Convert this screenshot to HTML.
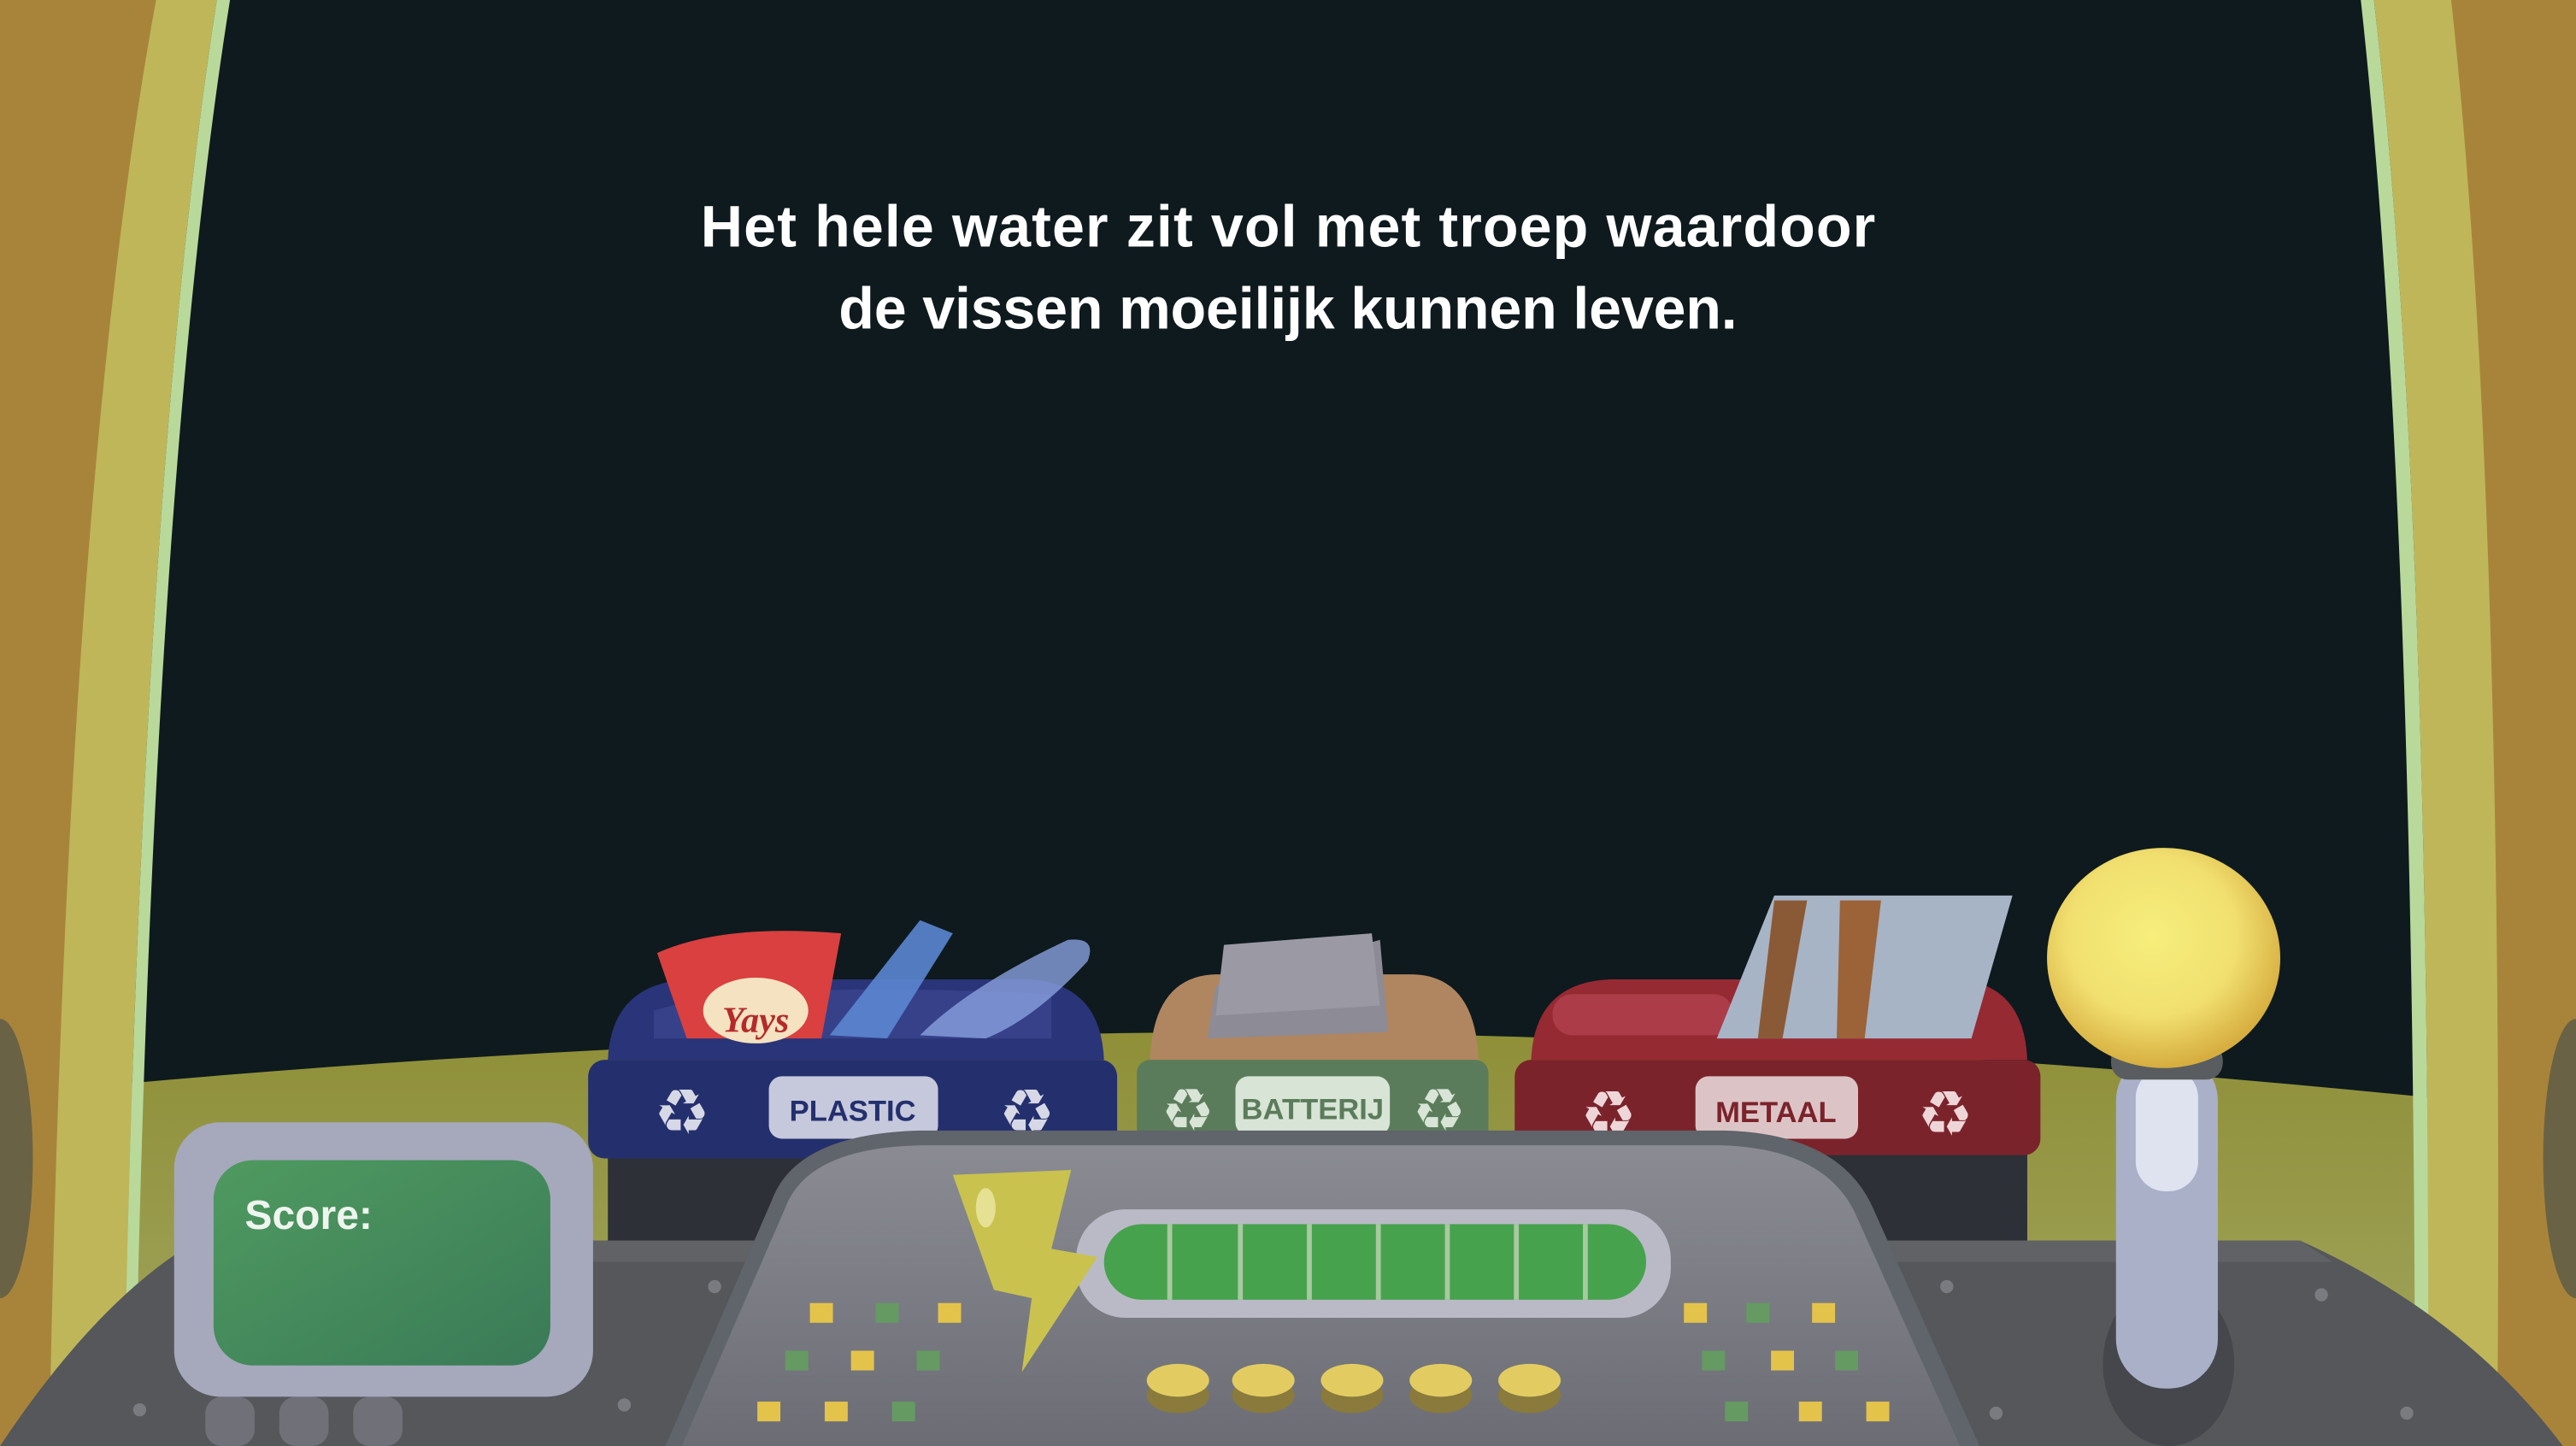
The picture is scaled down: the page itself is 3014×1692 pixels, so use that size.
<!DOCTYPE html>
<html><head><meta charset="utf-8"><style>
html,body{margin:0;padding:0;background:#0e1a1e;overflow:hidden}
svg{display:block}
</style></head><body>
<svg width="3014" height="1692" viewBox="0 0 1568 880" preserveAspectRatio="none" xmlns="http://www.w3.org/2000/svg">
<defs>
<linearGradient id="gnd" x1="0" y1="0" x2="0" y2="1"><stop offset="0" stop-color="#8f8f38"/><stop offset="1" stop-color="#a3a862"/></linearGradient>
<linearGradient id="con" x1="0" y1="0" x2="0" y2="1"><stop offset="0" stop-color="#8a8b93"/><stop offset="1" stop-color="#6c6d74"/></linearGradient>
<radialGradient id="ball" cx="0.45" cy="0.4" r="0.6"><stop offset="0" stop-color="#f6ee7c"/><stop offset="0.6" stop-color="#f1e070"/><stop offset="1" stop-color="#d6ad3f"/></radialGradient>
<linearGradient id="scr" x1="0" y1="0" x2="1" y2="1"><stop offset="0" stop-color="#4f9a60"/><stop offset="1" stop-color="#3a7a57"/></linearGradient>
</defs>
<rect width="1568" height="880" fill="#0e1a1e"/>
<path d="M70 660 Q400 630 760 628 Q1100 630 1480 668 L1480 880 L70 880Z" fill="url(#gnd)"/>
<path d="M0 0 L132 0 Q85 300 75 880 L0 880Z" fill="#bfb65a"/>
<path d="M132 0 L140 0 Q92 300 82 880 L75 880 Q85 300 132 0Z" fill="#b9d99a"/>
<path d="M0 0 L95 0 Q40 300 30 880 L0 880Z" fill="#a8843a"/>
<ellipse cx="0" cy="705" rx="20" ry="85" fill="#6a6245"/>
<path d="M1568 0 L1445 0 Q1480 300 1478 880 L1568 880Z" fill="#bfb65a"/>
<path d="M1445 0 L1437 0 Q1470 300 1470 880 L1478 880 Q1480 300 1445 0Z" fill="#b9d99a"/>
<path d="M1568 0 L1492 0 Q1525 300 1520 880 L1568 880Z" fill="#a8843a"/>
<ellipse cx="1568" cy="705" rx="20" ry="85" fill="#6a6245"/>
<g font-family="Liberation Sans, sans-serif" font-weight="bold" fill="#fff" text-anchor="middle">
<text x="784" y="150" font-size="35.5" textLength="715" lengthAdjust="spacing">Het hele water zit vol met troep waardoor</text>
<text x="784" y="200" font-size="35.5" textLength="547" lengthAdjust="spacing">de vissen moeilijk kunnen leven.</text>
</g>
<rect x="370" y="700" width="302" height="60" fill="#2e3037"/>
<path d="M370 645 Q372 598 420 596 L625 596 Q670 598 672 645Z" fill="#2a3478"/>
<path d="M398 615 Q460 596 640 605 L640 632 L398 632Z" fill="#36418a"/>
<path d="M400 580 Q440 562 512 568 L500 632 L418 632Z" fill="#d9403f"/>
<ellipse cx="460" cy="615" rx="32" ry="20" fill="#f4e2c0"/>
<text x="460" y="628" font-family="Liberation Serif, serif" font-style="italic" font-weight="bold" font-size="22" fill="#b52a2a" text-anchor="middle">Yays</text>
<path d="M505 630 L560 560 L580 568 L540 632Z" fill="#5b86d0" opacity=".9"/>
<path d="M560 630 Q590 600 650 572 Q668 570 662 585 Q630 620 600 632Z" fill="#8aa0dd" opacity=".8"/>
<rect x="358" y="645" width="322" height="60" rx="10" fill="#24306d"/>
<rect x="468" y="655" width="103" height="38" rx="8" fill="#c6c8dc"/>
<text x="519" y="682" font-family="Liberation Sans, sans-serif" font-weight="bold" font-size="18" fill="#24306d" text-anchor="middle">PLASTIC</text>
<g font-family="DejaVu Sans, sans-serif" font-size="38" fill="#d6d8e6" text-anchor="middle"><text x="415" y="690">♻</text><text x="625" y="690">♻</text></g>
<path d="M700 645 Q702 594 740 593 L860 593 Q898 594 900 645Z" fill="#b08660"/>
<path d="M740 600 L840 572 L845 628 L735 632Z" fill="#8c8b96"/>
<path d="M745 575 L835 568 L840 612 L740 618Z" fill="#9b9aa4"/>
<rect x="692" y="645" width="214" height="50" rx="8" fill="#5b7c5a"/>
<rect x="752" y="655" width="94" height="36" rx="8" fill="#d7e4d6"/>
<text x="799" y="681" font-family="Liberation Sans, sans-serif" font-weight="bold" font-size="18" fill="#5b7c5a" text-anchor="middle">BATTERIJ</text>
<g font-family="DejaVu Sans, sans-serif" font-size="36" fill="#d7e4d6" text-anchor="middle"><text x="723" y="688">♻</text><text x="876" y="688">♻</text></g>
<rect x="932" y="700" width="302" height="60" fill="#2e3037"/>
<path d="M932 645 Q934 598 980 596 L1190 596 Q1232 598 1234 645Z" fill="#962a33"/>
<rect x="945" y="605" width="110" height="25" rx="12" fill="#ac3c48"/>
<path d="M1045 632 L1080 545 L1225 545 L1200 632Z" fill="#a7b4c6"/>
<path d="M1080 548 L1100 548 L1085 632 L1070 632Z" fill="#8a5a36"/>
<path d="M1120 548 L1145 548 L1135 632 L1118 632Z" fill="#9c6238"/>
<rect x="922" y="645" width="320" height="58" rx="10" fill="#7b232b"/>
<rect x="1032" y="655" width="99" height="38" rx="8" fill="#dcc4c6"/>
<text x="1081" y="683" font-family="Liberation Sans, sans-serif" font-weight="bold" font-size="18" fill="#7b232b" text-anchor="middle">METAAL</text>
<g font-family="DejaVu Sans, sans-serif" font-size="38" fill="#eed6d8" text-anchor="middle"><text x="979" y="691">♻</text><text x="1184" y="691">♻</text></g>
<path d="M0 880 Q60 790 120 755 L1400 755 Q1500 800 1560 880Z" fill="#55575a"/>
<path d="M120 755 L1400 755 L1420 768 L110 768Z" fill="#606266"/>
<g fill="#7a7b80"><circle cx="435" cy="783" r="4"/><circle cx="380" cy="855" r="4"/><circle cx="85" cy="858" r="4"/><circle cx="1185" cy="783" r="4"/><circle cx="1413" cy="788" r="4"/><circle cx="1215" cy="860" r="4"/><circle cx="1465" cy="860" r="4"/></g>
<g fill="#707178"><rect x="125" y="850" width="30" height="30" rx="10"/><rect x="170" y="850" width="30" height="30" rx="10"/><rect x="215" y="850" width="30" height="30" rx="10"/></g>
<path d="M405 880 L470 730 Q485 690 560 688 L1050 688 Q1120 690 1140 735 L1205 880Z" fill="#60646b"/>
<path d="M415 880 L478 735 Q492 698 562 697 L1048 697 Q1112 699 1130 740 L1193 880Z" fill="url(#con)"/>
<rect x="655" y="736" width="362" height="66" rx="30" fill="#b9bac6"/>
<rect x="672" y="745" width="330" height="46" rx="23" fill="#47a24e"/>
<g stroke="#a9c9a0" stroke-width="3"><line x1="712" y1="745" x2="712" y2="791"/><line x1="755" y1="745" x2="755" y2="791"/><line x1="797" y1="745" x2="797" y2="791"/><line x1="839" y1="745" x2="839" y2="791"/><line x1="881" y1="745" x2="881" y2="791"/><line x1="923" y1="745" x2="923" y2="791"/><line x1="965" y1="745" x2="965" y2="791"/></g>
<path d="M580 715 L652 712 L640 760 L668 765 L622 835 L628 790 L605 785Z" fill="#c9c24e"/>
<ellipse cx="600" cy="735" rx="6" ry="12" fill="#e6e092"/>
<g fill="#e4c34b"><rect x="493" y="793" width="14" height="12"/><rect x="571" y="793" width="14" height="12"/><rect x="518" y="822" width="14" height="12"/><rect x="461" y="853" width="14" height="12"/><rect x="502" y="853" width="14" height="12"/><rect x="1025" y="793" width="14" height="12"/><rect x="1103" y="793" width="14" height="12"/><rect x="1078" y="822" width="14" height="12"/><rect x="1095" y="853" width="14" height="12"/><rect x="1136" y="853" width="14" height="12"/></g>
<g fill="#659a63"><rect x="533" y="793" width="14" height="12"/><rect x="478" y="822" width="14" height="12"/><rect x="558" y="822" width="14" height="12"/><rect x="543" y="853" width="14" height="12"/><rect x="1063" y="793" width="14" height="12"/><rect x="1036" y="822" width="14" height="12"/><rect x="1117" y="822" width="14" height="12"/><rect x="1050" y="853" width="14" height="12"/></g>
<g><g fill="#8a7a3c"><ellipse cx="717" cy="849" rx="19" ry="11"/><ellipse cx="769" cy="849" rx="19" ry="11"/><ellipse cx="823" cy="849" rx="19" ry="11"/><ellipse cx="877" cy="849" rx="19" ry="11"/><ellipse cx="931" cy="849" rx="19" ry="11"/></g>
<g fill="#e2cc62"><ellipse cx="717" cy="840" rx="19" ry="10"/><ellipse cx="769" cy="840" rx="19" ry="10"/><ellipse cx="823" cy="840" rx="19" ry="10"/><ellipse cx="877" cy="840" rx="19" ry="10"/><ellipse cx="931" cy="840" rx="19" ry="10"/></g></g>
<rect x="106" y="683" width="255" height="167" rx="28" fill="#a6a8bc"/>
<rect x="130" y="706" width="205" height="125" rx="24" fill="url(#scr)"/>
<text x="149" y="748" font-family="Liberation Sans, sans-serif" font-weight="bold" font-size="25" fill="#eef4ee">Score:</text>
<ellipse cx="1320" cy="830" rx="40" ry="50" fill="#45474c"/>
<rect x="1288" y="640" width="62" height="205" rx="30" fill="#a9b0c8"/>
<rect x="1300" y="650" width="38" height="75" rx="18" fill="#dfe2ef"/>
<rect x="1285" y="635" width="68" height="22" rx="10" fill="#5a5d5f"/>
<ellipse cx="1317" cy="583" rx="71" ry="67" fill="url(#ball)"/>
</svg>
</body></html>
